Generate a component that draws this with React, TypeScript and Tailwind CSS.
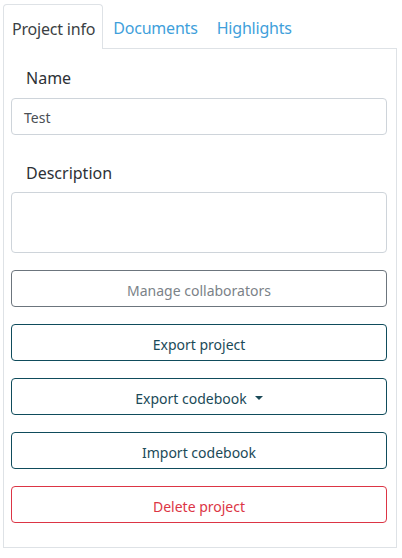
import { useState } from 'react';

const tabs = ['Project info', 'Documents', 'Highlights'];

const App = () => {
  const [active] = useState('Project info');

  return (
    <div className="w-[402px] h-[558px] bg-white pl-[3px] pt-[4px]" style={{ fontFamily: '"Noto Sans", "Open Sans", sans-serif' }}>
      <div className="w-[394px]">
        <div className="flex h-[45px] gap-[1px]">
          {tabs.map((t) => (
            <div
              key={t}
              className={
                t === active
                  ? 'h-[45px] pl-[8px] pr-[7px] pt-[12px] text-[16px] leading-[24px] tracking-[-0.2px] text-[#3b3f44] border border-b-0 border-[#dee2e6] rounded-t-[4px] bg-white relative z-10'
                  : 'h-[44px] px-[9px] pt-[12px] text-[16px] leading-[24px] tracking-[-0.2px] text-[#3f9fdb]'
              }
            >
              {t}
            </div>
          ))}
        </div>
        <div className="-mt-px h-[500px] border border-[#dee2e6] pl-[7px] pr-[9px] pt-[17px]">
          <div className="pl-[15px] text-[16px] leading-[24px] text-[#2d3136]">Name</div>
          <div className="mt-[8px] h-[37px] border border-[#ced4da] rounded-[4px] flex items-center px-[12px] pt-[2px] text-[14px] text-[#4a4f55]">
            Test
          </div>
          <div className="mt-[26px] pl-[15px] text-[16px] leading-[24px] text-[#2d3136]">Description</div>
          <div className="mt-[7px] h-[61px] border border-[#ced4da] rounded-[4px]"></div>
          <div className="mt-[17px] flex flex-col gap-[17px]">
            <button className="h-[37px] pt-[3px] border border-[#6c757d] rounded-[4px] text-[14px] text-[#7b8288]">
              Manage collaborators
            </button>
            <button className="h-[37px] pt-[3px] border border-[#0f4c5c] rounded-[4px] text-[14px] text-[#1b4a58]">
              Export project
            </button>
            <button className="h-[37px] pt-[3px] border border-[#0f4c5c] rounded-[4px] text-[14px] text-[#1b4a58] flex items-center justify-center gap-[8px]">
              Export codebook
              <span className="w-0 h-0 border-l-[4px] border-r-[4px] border-t-[4px] border-l-transparent border-r-transparent border-t-[#1b4a58]"></span>
            </button>
            <button className="h-[37px] pt-[3px] border border-[#0f4c5c] rounded-[4px] text-[14px] text-[#1b4a58]">
              Import codebook
            </button>
            <button className="h-[37px] pt-[3px] border border-[#dc3545] rounded-[4px] text-[14px] text-[#dc3545]">
              Delete project
            </button>
          </div>
        </div>
      </div>
    </div>
  );
};

export default App;
